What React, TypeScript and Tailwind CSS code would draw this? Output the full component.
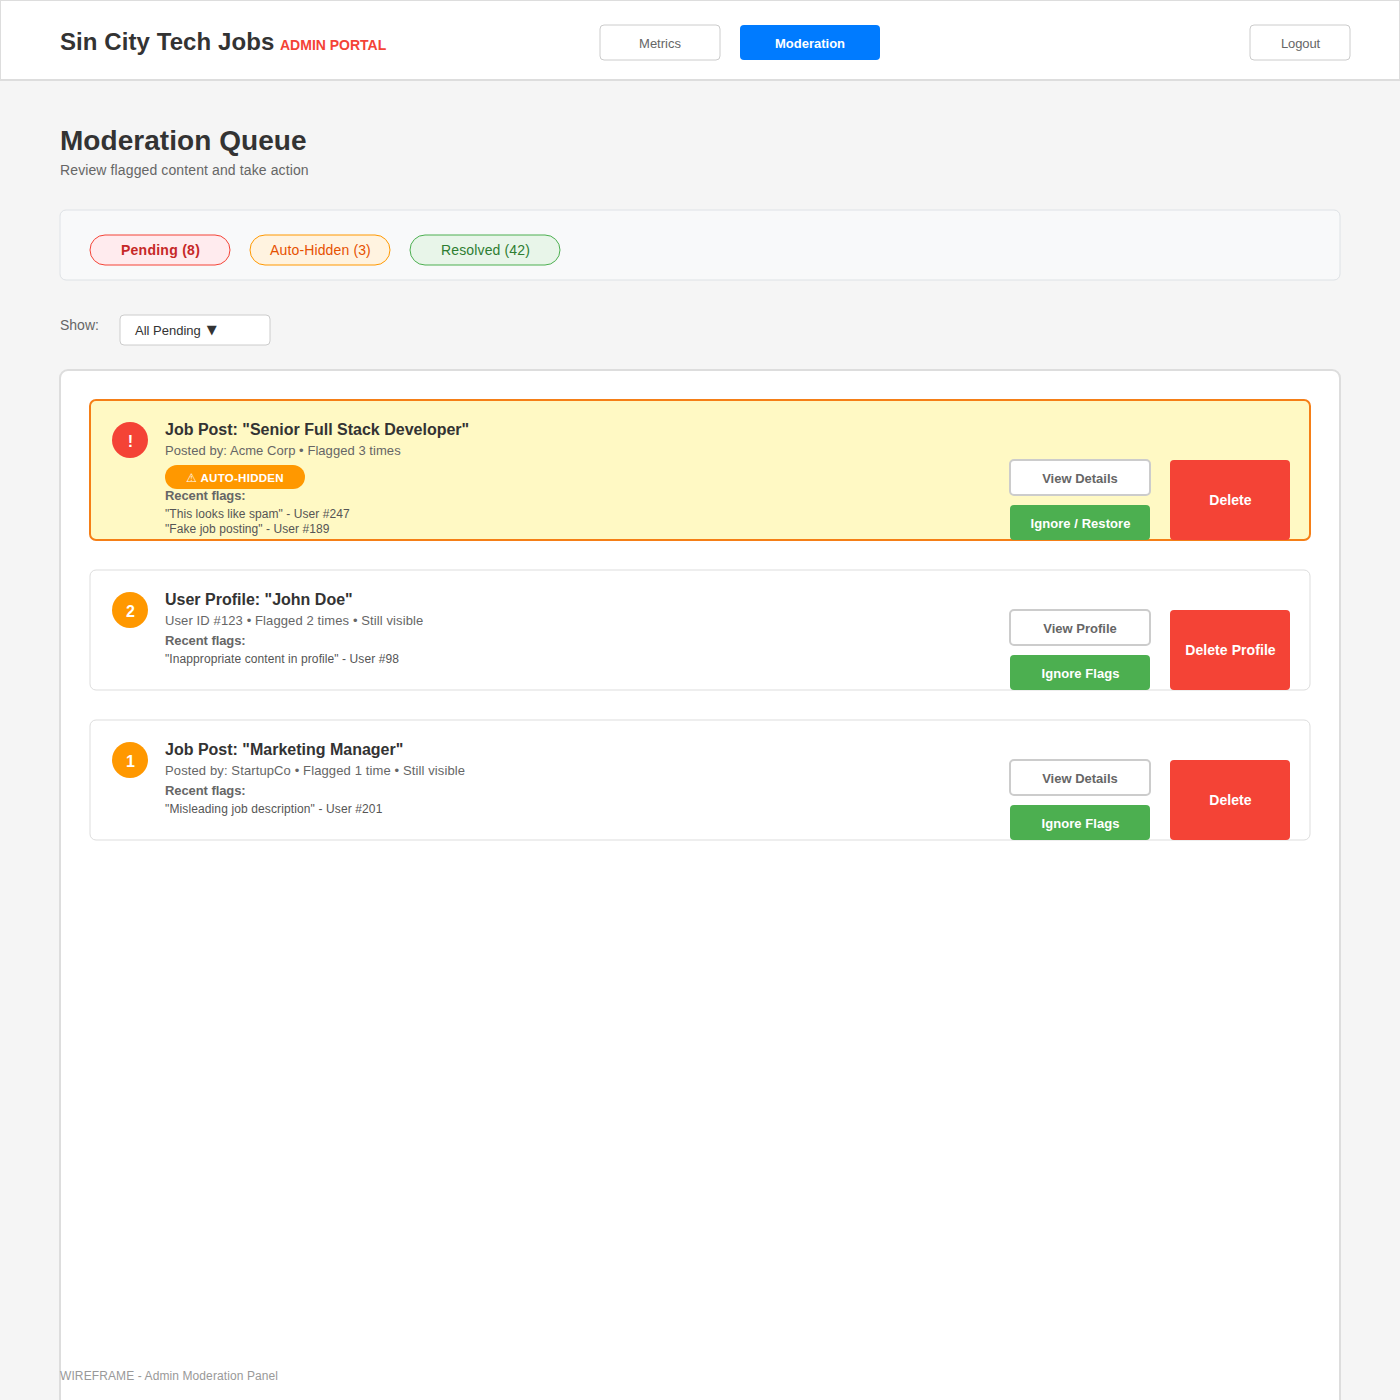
import React from "react";

// One-pixel outline centred on the box edge.
const hairline =
  "relative isolate before:absolute before:-z-10 before:left-0 before:top-0 before:w-[calc(100%+1px)] before:h-[calc(100%+1px)] before:-translate-x-[0.5px] before:-translate-y-[0.5px] before:border before:content-['']";

// Two-pixel outline centred on the box edge.
const outline =
  "relative isolate before:absolute before:-z-10 before:-inset-px before:border-2 before:content-['']";

type Flagged = {
  mark: string;
  markClass: string;
  title: string;
  meta: string;
  metaClass: string;
  hidden?: boolean;
  flags: string[];
  flagsClass: string;
  view: string;
  ignore: string;
  remove: string;
};

const items: Flagged[] = [
  {
    mark: "!",
    markClass: "bg-[#f44336]",
    title: 'Job Post: "Senior Full Stack Developer"',
    meta: "Posted by: Acme Corp • Flagged 3 times",
    metaClass: "tracking-[0.055px]",
    hidden: true,
    flags: ['"This looks like spam" - User #247', '"Fake job posting" - User #189'],
    flagsClass: "tracking-[0.06px]",
    view: "View Details",
    ignore: "Ignore / Restore",
    remove: "Delete",
  },
  {
    mark: "2",
    markClass: "bg-[#ff9800]",
    title: 'User Profile: "John Doe"',
    meta: "User ID #123 • Flagged 2 times • Still visible",
    metaClass: "tracking-[0.11px]",
    flags: ['"Inappropriate content in profile" - User #98'],
    flagsClass: "tracking-[0.09px]",
    view: "View Profile",
    ignore: "Ignore Flags",
    remove: "Delete Profile",
  },
  {
    mark: "1",
    markClass: "bg-[#ff9800]",
    title: 'Job Post: "Marketing Manager"',
    meta: "Posted by: StartupCo • Flagged 1 time • Still visible",
    metaClass: "tracking-[0.12px]",
    flags: ['"Misleading job description" - User #201'],
    flagsClass: "tracking-[0.12px]",
    view: "View Details",
    ignore: "Ignore Flags",
    remove: "Delete",
  },
];

function Header() {
  return (
    <header className="flex h-[81px] shrink-0 items-start border border-b-2 border-[#ddd] bg-white pl-[59px] pr-[49px]">
      <div className="flex w-[540px] pt-[27px]">
        <h1 className="w-[220px] whitespace-nowrap text-[24px] font-bold leading-[27px] tracking-[0.08px] text-[#333]">Sin City Tech Jobs</h1>
        <span className="pt-[9px] text-[14px] font-bold leading-[16px] text-[#f44336]">ADMIN PORTAL</span>
      </div>
      <nav className="flex flex-1 gap-5 pt-6 text-[13px] leading-[15px]">
        <button className={`${hairline} h-[35px] w-[120px] rounded-[4px] bg-white pt-[2px] text-[#666] before:rounded-[4.5px] before:border-[#ccc]`}>
          Metrics
        </button>
        <button className="h-[35px] w-[140px] rounded-[4px] bg-[#007bff] pt-[2px] font-bold text-white">Moderation</button>
      </nav>
      <div className="pt-6 text-[13px] leading-[15px]">
        <button className={`${hairline} h-[35px] w-[100px] rounded-[4px] bg-white pl-px pt-[2px] tracking-[-0.1px] text-[#666] before:rounded-[4.5px] before:border-[#ccc]`}>
          Logout
        </button>
      </div>
    </header>
  );
}

function FlaggedCard({ item }: { item: Flagged }) {
  return (
    <article
      className={
        item.hidden
          ? `${outline} flex h-[140px] rounded-[6px] bg-[#fff9c4] pl-[22px] pr-5 before:rounded-[7px] before:border-[#f57f17]`
          : `${hairline} flex h-[120px] rounded-[6px] bg-white pl-[22px] pr-5 before:rounded-[6.5px] before:border-[#ddd]`
      }
    >
      <div className={`mt-[22px] h-9 w-9 rounded-full pl-px pt-[11px] text-center text-[16px] font-bold leading-[17px] text-white ${item.markClass}`}>
        {item.mark}
      </div>
      <div className="ml-[17px] flex-1 whitespace-nowrap pt-[21px]">
        <h3 className="text-[16px] font-bold leading-[17px] text-[#333]">{item.title}</h3>
        <p className={`mt-[5px] text-[13px] leading-[15px] text-[#666] ${item.metaClass}`}>{item.meta}</p>
        {item.hidden && (
          <div className="mt-[7px] h-6 w-[140px] overflow-hidden rounded-full bg-[#ff9800] pt-[6px] text-center text-[11.5px] font-bold leading-[14px] tracking-[0.28px] text-white">
            <span className="font-normal">⚠</span> AUTO-HIDDEN
          </div>
        )}
        <p className={`text-[13px] font-bold leading-[15px] tracking-[-0.08px] text-[#666] ${item.hidden ? "-mt-px" : "mt-[5px]"}`}>Recent flags:</p>
        <ul className={`mt-[4px] text-[12px] leading-[15px] text-[#555] ${item.flagsClass}`}>
          {item.flags.map((f) => (
            <li key={f}>{f}</li>
          ))}
        </ul>
      </div>
      <div className="flex items-end gap-5 font-bold">
        <div className="flex flex-col gap-[10px] text-[13px] leading-[15px]">
          <button className={`${outline} h-[35px] w-[140px] rounded-[4px] bg-white pt-[2px] text-[#666] before:rounded-[5px] before:border-[#ccc]`}>
            {item.view}
          </button>
          <button className="h-[35px] w-[140px] rounded-[4px] bg-[#4caf50] pl-px pt-[2px] tracking-[0.06px] text-white">{item.ignore}</button>
        </div>
        <button className="h-20 w-[120px] whitespace-nowrap rounded-[4px] bg-[#f44336] pl-px text-[14px] leading-[16px] tracking-[0.07px] text-white">
          {item.remove}
        </button>
      </div>
    </article>
  );
}

export default function App() {
  return (
    <div className="relative flex h-[1400px] w-[1400px] flex-col overflow-hidden bg-[#f5f5f5] font-['Liberation_Sans',Arial,sans-serif]">
      <Header />
      <main className="shrink-0 px-[60px] pt-[44px]">
        <h2 className="text-[28px] font-bold leading-[31px] tracking-[0.05px] text-[#333]">Moderation Queue</h2>
        <p className="mt-[6px] text-[14px] leading-[16px] tracking-[0.115px] text-[#666]">Review flagged content and take action</p>

        <div className={`${hairline} mt-8 flex h-[70px] gap-5 rounded-[6px] bg-[#f8f9fa] pl-[30px] pt-[25px] text-[14px] leading-[16px] before:rounded-[6.5px] before:border-[#dee2e6]`}>
          <button className={`${hairline} h-[30px] w-[140px] rounded-[15px] bg-[#ffebee] pl-px font-bold tracking-[0.27px] text-[#c62828] before:rounded-[15.5px] before:border-[#f44336]`}>
            Pending (8)
          </button>
          <button className={`${hairline} h-[30px] w-[140px] rounded-[15px] bg-[#fff3e0] pl-px tracking-[0.13px] text-[#e65100] before:rounded-[15.5px] before:border-[#ff9800]`}>
            Auto-Hidden (3)
          </button>
          <button className={`${hairline} h-[30px] w-[150px] rounded-[15px] bg-[#e8f5e9] pl-px tracking-[0.15px] text-[#2e7d32] before:rounded-[15.5px] before:border-[#4caf50]`}>
            Resolved (42)
          </button>
        </div>

        <div className="mt-[35px] flex h-[30px]">
          <span className="w-[60px] pt-[2px] text-[14px] leading-[16px] text-[#666]">Show:</span>
          <button className={`${hairline} flex h-[30px] w-[150px] gap-[6px] rounded-[4px] bg-white pl-[15px] pt-[8px] text-left text-[13px] leading-[15px] text-[#333] before:rounded-[4.5px] before:border-[#ccc]`}>
            <span>All Pending</span>
            <span className="-mt-px font-['DejaVu_Sans']">▼</span>
          </button>
        </div>

        <section className={`${outline} mt-[25px] flex h-[1100px] flex-col gap-[30px] rounded-[8px] bg-white p-[30px] before:rounded-[9px] before:border-[#ddd]`}>
          {items.map((item) => (
            <FlaggedCard key={item.title} item={item} />
          ))}
        </section>
      </main>
      <footer className="absolute left-[60px] top-[1369px] text-[12px] leading-[14px] tracking-[0.1px] text-[#999]">WIREFRAME - Admin Moderation Panel</footer>
    </div>
  );
}
